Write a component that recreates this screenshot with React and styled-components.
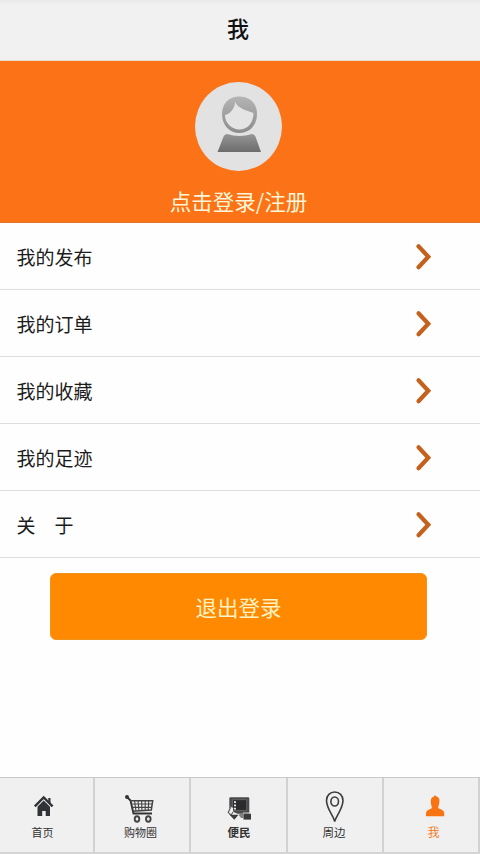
import React, { useState } from 'react';
import styled, { createGlobalStyle } from 'styled-components';

const GlobalStyle = createGlobalStyle`
  * {
    box-sizing: border-box;
  }

  body {
    margin: 0;
    background: #fefefe;
    font-family: 'Noto Sans CJK SC', 'Noto Sans', sans-serif;
  }
`;

const Page = styled.div`
  display: flex;
  flex-direction: column;
  width: 100%;
  height: 100vh;
  min-height: 854px;
`;

const Header = styled.header`
  display: flex;
  align-items: center;
  justify-content: center;
  height: 61px;
  padding: 0 4px 6px 0;
  background: linear-gradient(#e9e9e9, #f1f1f1 5px);
  border-bottom: 1px solid #e9dccb;
`;

const Title = styled.h1`
  margin: 0;
  font-size: 22px;
  line-height: 32px;
  font-weight: 500;
  color: #111;
`;

const Profile = styled.section`
  display: flex;
  flex-direction: column;
  align-items: center;
  height: 162px;
  padding: 21px 3px 0 0;
  background: #fc7216;
  border-bottom: 1px solid #e0722a;
`;

const Avatar = styled.svg`
  width: 87px;
  height: 89px;
`;

const LoginLink = styled.a`
  margin-top: 14px;
  font-size: 21.5px;
  line-height: 32px;
  color: #fff6d8;
  white-space: nowrap;
  cursor: pointer;
`;

const Menu = styled.ul`
  margin: 0;
  padding: 0;
  list-style: none;
`;

const MenuItem = styled.li`
  display: flex;
  align-items: center;
  justify-content: space-between;
  height: 67px;
  padding: 2px 48px 0 16.5px;
  border-bottom: 1px solid #dedede;
  font-size: 19px;
  line-height: 28px;
  color: #1c1c1c;
  white-space: pre;
  cursor: pointer;
`;

const Arrow = styled.svg`
  width: 17px;
  height: 28px;
`;

const LogoutButton = styled.button`
  width: 377px;
  height: 67px;
  margin: 15px 0 0 50px;
  padding: 0;
  border: 1px solid #f09420;
  border-radius: 6px;
  background: #ff8900;
  font-family: inherit;
  font-size: 21.5px;
  line-height: 32px;
  color: #fff3c4;
  cursor: pointer;
`;

const TabBar = styled.nav`
  display: grid;
  grid-template-columns: 95px 96px 97px 96px 96px;
  height: 77px;
  margin-top: auto;
  border-top: 1px solid #c9c9c9;
  border-bottom: 2px solid #d4d4d4;
  background: #f0f0f0;
`;

const Tab = styled.a`
  display: flex;
  flex-direction: column;
  align-items: center;
  padding: ${props => props.$padding};
  border-right: 2px solid #d2d2d2;
  color: ${props => (props.$active ? '#f47a1c' : '#333')};
  cursor: pointer;

  svg {
    flex: none;
    width: 36px;
    height: 36px;
  }
`;

const TabLabel = styled.span`
  font-size: ${props => props.$size || 11}px;
  line-height: 16px;
  font-weight: ${props => (props.$bold ? 700 : 400)};
  white-space: nowrap;
  margin-left: ${props => props.$offset || 0}px;
`;

const AvatarIcon = () => (
  <Avatar viewBox="0 0 87 89">
    <defs>
      <linearGradient id="hair" x1="0" y1="0" x2="0" y2="1">
        <stop offset="0" stopColor="#b4b4b4" />
        <stop offset="1" stopColor="#8d8d8d" />
      </linearGradient>
      <linearGradient id="suit" x1="0" y1="0" x2="0" y2="1">
        <stop offset="0" stopColor="#959595" />
        <stop offset="1" stopColor="#6c6c6c" />
      </linearGradient>
    </defs>
    <ellipse cx="43.5" cy="44.5" rx="43.5" ry="44.5" fill="#e2e2e2" />
    <path
      d="M44.5 14.5C34 14.5 27 21.5 27 32C27 43.5 34.5 51 44.5 51C54.5 51 62 43.5 62 32C62 21.5 55 14.5 44.5 14.5Z"
      fill="url(#hair)"
    />
    <path
      d="M40.5 19.5C41.5 26 51.5 28.5 58.5 31C58.5 41 52.5 47.5 44.5 47.5C36.500 47.5 30 41 30 33C36 31.5 39.500 26 40.5 19.5Z"
      fill="#e4e4e4"
    />
    <path
      d="M32 52Q44.5 56 57 52Q60 52.5 61 56L66 70H22.5L28 56Q29 52.5 32 52Z"
      fill="url(#suit)"
    />
  </Avatar>
);

const ArrowIcon = () => (
  <Arrow viewBox="0 0 17 28" fill="none">
    <path d="M3.5 3.2L13.3 13.7L3.5 24.3" stroke="#c4611c" strokeWidth="4.2" strokeLinecap="round" />
  </Arrow>
);

const HomeIcon = () => (
  <svg viewBox="0 0 36 36">
    <path d="M9.8 18.3L18.7 9.5L27.6 18.3" stroke="#303236" strokeWidth="2.4" fill="none" />
    <path d="M23.3 10H25.5V15.5L23.3 13.3Z" fill="#303236" />
    <path d="M12.5 18.8L18.7 12.6L25 18.8V28H20.7V23H17.2V28H12.5Z" fill="#303236" />
  </svg>
);

const CartIcon = () => (
  <svg viewBox="0 0 36 36" fill="none" stroke="#444">
    <circle cx="4" cy="9" r="2" fill="#333" stroke="none" />
    <path d="M4 9L7.5 12.5L10.5 25.5H29" stroke="#333" strokeWidth="1.9" />
    <path d="M7.5 12.7H29.7L28.3 22L9.7 23.2" strokeWidth="1.5" />
    <path d="M8 16H29.3M9 19.4H28.8" strokeWidth="1.1" />
    <path d="M11.5 12.7L13 23M15 12.7L16 23M18.6 12.7L19 23M22.2 12.7V22.5M25.8 12.7L25.2 22" strokeWidth="1.1" />
    <ellipse cx="14" cy="31" rx="2.300" ry="2.700" strokeWidth="1.9" />
    <ellipse cx="25.3" cy="31" rx="2.300" ry="2.700" strokeWidth="1.9" />
  </svg>
);

const ServiceIcon = () => (
  <svg viewBox="0 0 36 36">
    <rect x="8.300" y="9.3" width="20" height="16.500" rx="1.3" fill="#4a4a4c" />
    <rect x="11.6" y="11.8" width="14.2" height="10.7" fill="#2b2b2e" stroke="#777" strokeWidth="0.6" />
    <path d="M13 13.3H15V15H13ZM13 16.5H15V18.2H13ZM13 19.7H15V21.400H13Z" fill="#e8e8e8" />
    {/* left hand */}
    <path d="M9.5 18.5L12.2 20L12 23.500L17.500 26.5H7.300L6.5 24.500Z" fill="#efefef" />
    <path d="M9.8 19L7.2 24.5L10 27.200L12 24" stroke="#555" strokeWidth="1.1" fill="none" />
    <path d="M8.500 26.800H17.500L13.3 31.800Z" fill="#3b3b3b" />
    {/* right hand */}
    <path d="M17.5 26.700L22.3 24.500V30H20Z" fill="#808080" />
    <rect x="22.500" y="25.6" width="7.500" height="6" fill="#3a3a3a" />
    <path d="M22 25H30" stroke="#ddd" strokeWidth="0.9" />
  </svg>
);

const PinIcon = () => (
  <svg viewBox="0 0 36 36" fill="none" stroke="#3d3d3f">
    <path
      d="M18.7 33.5C17.5 28 10.5 20.5 10.5 12.5C10.5 7.5 14 4 18.7 4C23.4 4 27 7.5 27 12.5C27 20.5 20 28 18.7 33.5Z"
      strokeWidth="1.6"
    />
    <ellipse cx="18.7" cy="13.5" rx="3.8" ry="4.5" strokeWidth="1.6" />
  </svg>
);

const UserIcon = () => (
  <svg viewBox="0 0 36 36">
    <path
      d="M19 7C19.5 8.5 22.5 8.6 23.2 11C23.7 13 23.3 16.5 22.3 18.500C22 20 22.5 20.500 24 21C27 22 28.200 23 28.200 25.5V28.300H10V25.5C10 23 11.500 22 14.300 21C15.800 20.500 16 20 15.700 18.5C14.700 16 14.500 12.500 15.300 10.500C16 9 18 9 19 7Z"
      fill="#f87413"
    />
  </svg>
);

const menuItems = ['我的发布', '我的订单', '我的收藏', '我的足迹', '关\u3000于'];

const tabs = [
  { label: '首页', icon: HomeIcon, padding: '10px 7px 0 0', offset: -1 },
  { label: '购物圈', icon: CartIcon, padding: '10px 3px 0 0', offset: 0 },
  { label: '便民', icon: ServiceIcon, padding: '10px 0 0 1px', size: 11.5, bold: true },
  { label: '周边', icon: PinIcon, padding: '10px 2px 0 0', size: 11.5 },
  { label: '我', icon: UserIcon, padding: '10px 0 0 5px', size: 12 },
];

const App = () => {
  const [activeTab, setActiveTab] = useState('我');

  return (
    <Page>
      <GlobalStyle />
      <Header>
        <Title>我</Title>
      </Header>

      <Profile>
        <AvatarIcon />
        <LoginLink>点击登录/注册</LoginLink>
      </Profile>

      <Menu>
        {menuItems.map(item => (
          <MenuItem key={item}>
            {item}
            <ArrowIcon />
          </MenuItem>
        ))}
      </Menu>

      <LogoutButton type="button">退出登录</LogoutButton>

      {/* Bottom navigation */}
      <TabBar>
        {tabs.map(({ label, icon: Icon, padding, size, bold, offset }) => (
          <Tab
            key={label}
            $padding={padding}
            $active={label === activeTab}
            onClick={() => setActiveTab(label)}
          >
            <Icon />
            <TabLabel $size={size} $bold={bold} $offset={offset}>{label}</TabLabel>
          </Tab>
        ))}
      </TabBar>
    </Page>
  );
};

export default App;
